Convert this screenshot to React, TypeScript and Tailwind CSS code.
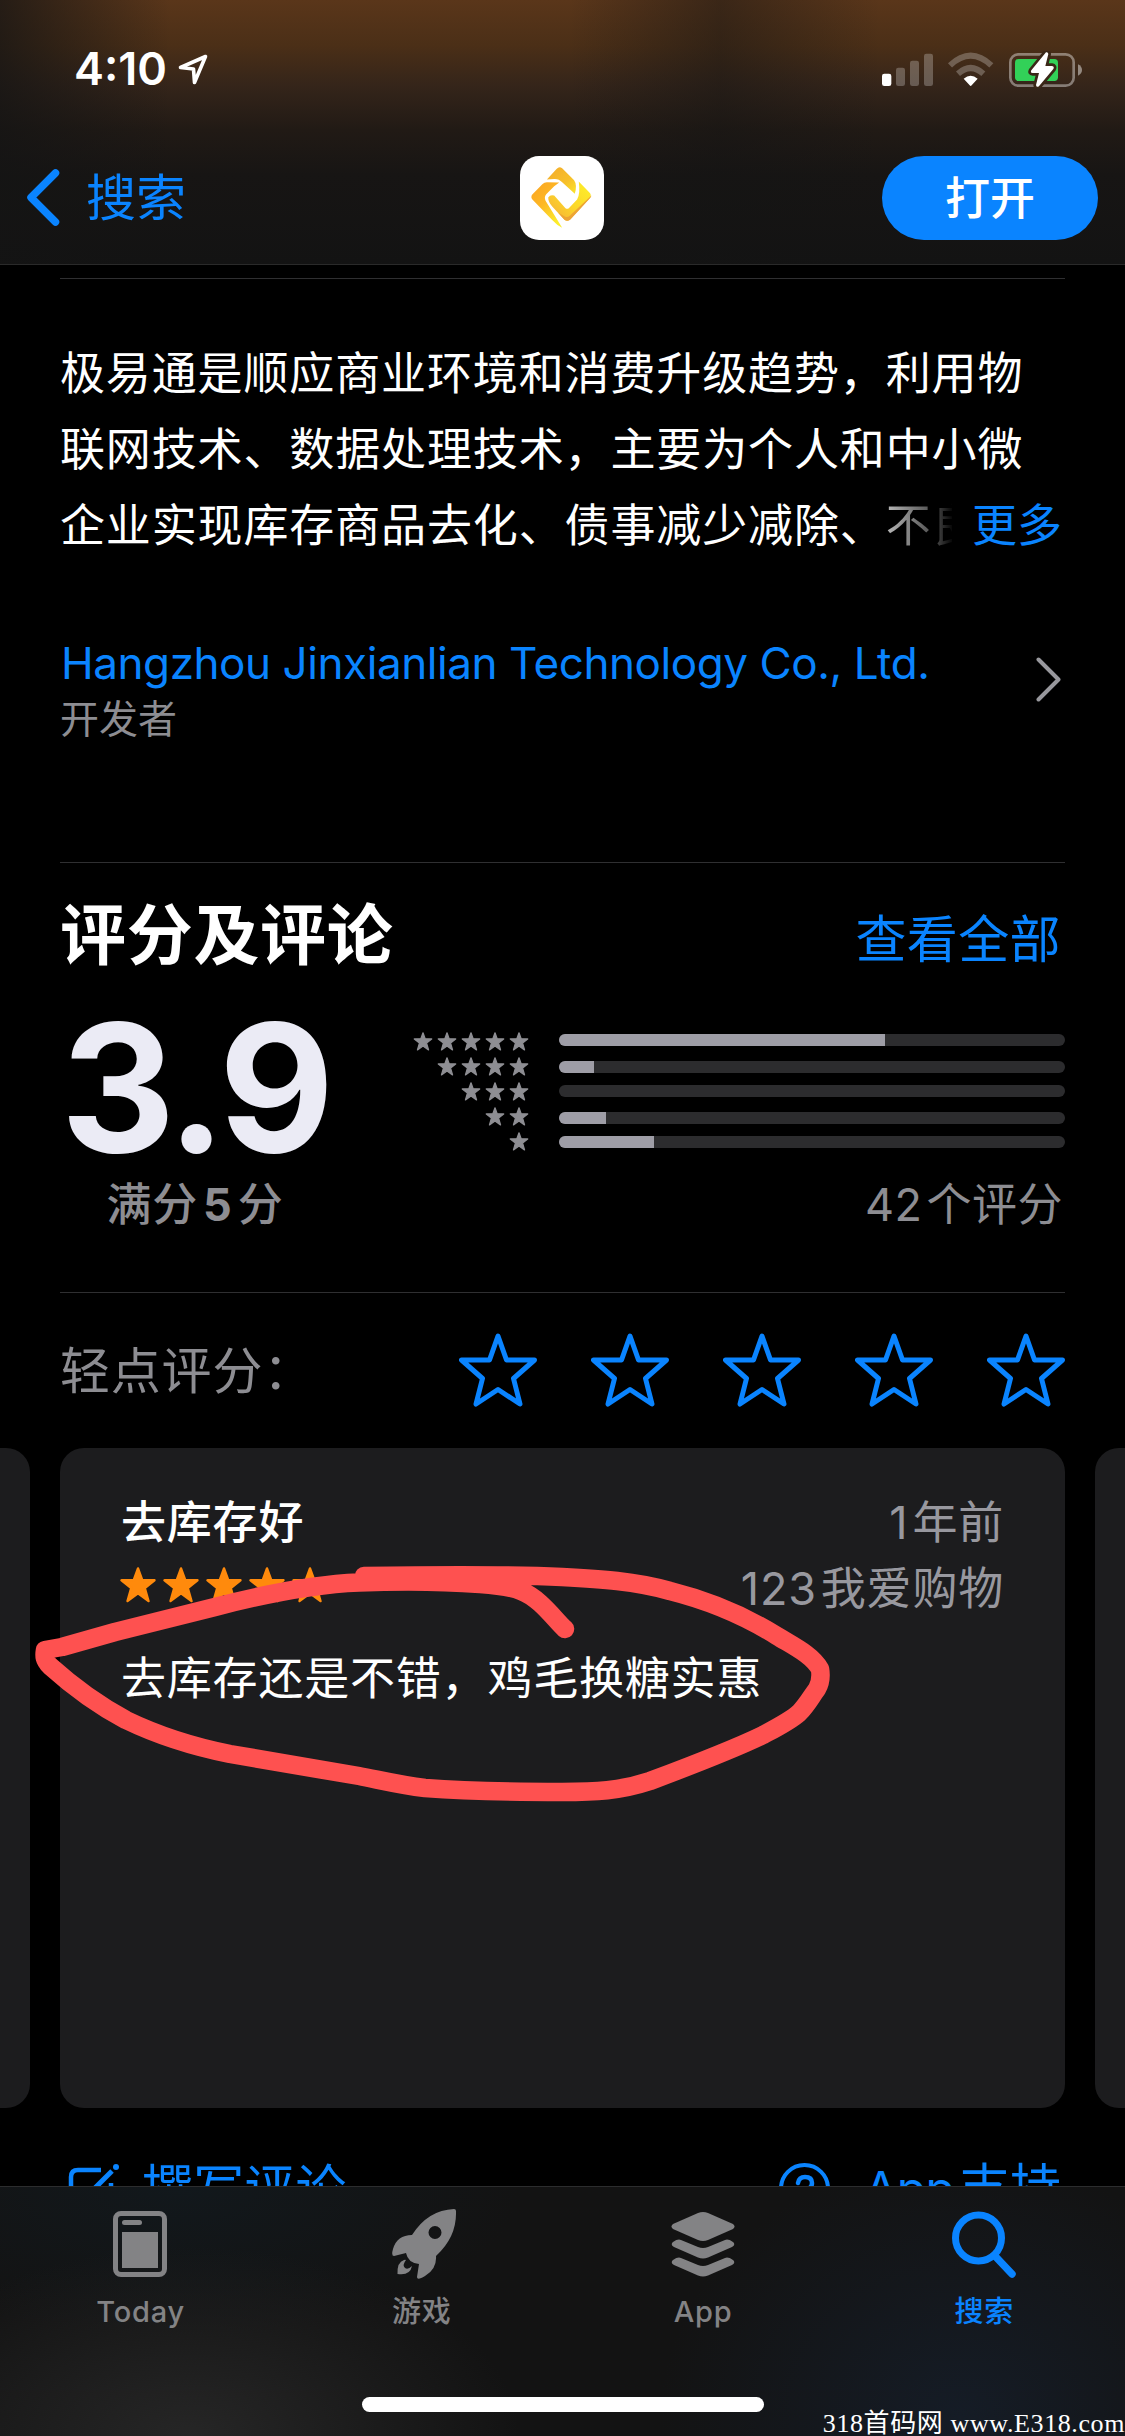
const HISTOGRAM = [
  { stars: 5, width: 326 },
  { stars: 4, width: 35 },
  { stars: 3, width: 0 },
  { stars: 2, width: 47 },
  { stars: 1, width: 95 },
]

const TABS = [
  { label: 'Today', icon: <TodayIcon />, color: 'text-[#838385]' },
  { label: '游戏', icon: <RocketIcon />, color: 'text-[#838385]' },
  { label: 'App', icon: <StackIcon />, color: 'text-[#838385]' },
  { label: '搜索', icon: <SearchIcon />, color: 'text-[#0a84ff]' },
]

function Star({ className }: { className: string }) {
  return (
    <svg className={className} viewBox="0 0 36 36" fill="currentColor" stroke="currentColor" strokeWidth="2.4" strokeLinejoin="round">
      <path d="M18 1.5 L22.200 13 L34.500 13.200 L24.800 21 L28.500 34 L18 26.400 L7.500 34 L11.200 21 L1.500 13.200 L13.800 13 Z" />
    </svg>
  )
}

function OutlineStar() {
  return (
    <svg className="w-[78px] h-[74px]" viewBox="0 0 78 74" fill="none" stroke="#0a84ff" strokeWidth="5" strokeLinejoin="round">
      <path d="M39 3 L47.5 27 L75.5 27 L54.5 45.5 L61 71 L39 56.5 L17 71 L23.5 45.5 L2.5 27 L30.5 27 Z" />
    </svg>
  )
}

function StatusIcons() {
  return (
    <svg className="w-[205px] h-[37px]" viewBox="30 30 615 111" fill="none">
      {/* Signal */}
      <rect x="36" y="98" width="28" height="37" rx="7" fill="#fff" />
      <g fill="#fff" fillOpacity="0.25">
        <rect x="78" y="80" width="27" height="55" rx="7" />
        <rect x="120" y="59" width="27" height="76" rx="7" />
        <rect x="162" y="38" width="27" height="97" rx="7" />
      </g>
      {/* Wifi */}
      <g stroke="#fff" strokeOpacity="0.25" strokeWidth="18">
        <path d="M240 73 Q302 15 364 73" />
        <path d="M264 98 Q302 64 340 98" />
      </g>
      <path d="M281 113 Q302 96 323 113 L305 133 Q302 137 299 133 Z" fill="#fff" />
      {/* Battery */}
      <rect x="421" y="40" width="190" height="94" rx="24" stroke="#fff" strokeOpacity="0.4" strokeWidth="8" />
      <path d="M624 70 Q636 76 636 87 Q636 98 624 104 Z" fill="#fff" fillOpacity="0.45" />
      <rect x="435" y="54" width="129" height="66" rx="11" fill="#32d158" />
      <path d="M528 34 L484 88 Q480 96 488 96 L507 96 L498 132 Q500 142 508 134 L550 84 Q554 76 546 75 L526 75 L535 39 Q534 32 528 34 Z" fill="#fff" stroke="#3a2717" strokeWidth="16" strokeLinejoin="round" paintOrder="stroke" />
    </svg>
  )
}

function AppLogo() {
  return (
    <svg className="w-[84px] h-[84px] rounded-[19px] bg-white" viewBox="31 33 253 253">
      <defs>
        <linearGradient id="top" x1="0" y1="0" x2="1" y2="1">
          <stop offset="0" stopColor="#f3ac2c" />
          <stop offset="0.6" stopColor="#f7bf2a" />
          <stop offset="1" stopColor="#fbe52a" />
        </linearGradient>
        <linearGradient id="left" x1="0" y1="0" x2="0.7" y2="1">
          <stop offset="0" stopColor="#fba324" />
          <stop offset="0.5" stopColor="#fdb824" />
          <stop offset="1" stopColor="#fcee2c" />
        </linearGradient>
        <linearGradient id="right" x1="1" y1="0" x2="0" y2="1">
          <stop offset="0" stopColor="#fdf02a" />
          <stop offset="0.5" stopColor="#fcd829" />
          <stop offset="1" stopColor="#f5a93a" />
        </linearGradient>
      </defs>
      <path d="M112 104 L141 72 Q149 63 158 70 L194 106 Q204 120 196 147 L158 112 Q148 101 134 102 Z" fill="url(#top)" />
      <path d="M68 149 L99 117 Q104 112 112 112 L149 113 Q143 118 134 124 L110 148 Q103 156 108 168 L158 249 Q142 242 128 226 L69 165 Q62 157 68 149 Z" fill="url(#left)" />
      <path d="M208 110 L240 143 Q248 151 241 160 L183 223 Q174 232 164 224 L128 185 Q116 172 116 158 Q122 148 134 152 L168 190 Q173 194 178 190 L203 164 Q213 148 208 110 Z" fill="url(#right)" />
      <path d="M246 152 Q246 156 241 161 L183 224 Q174 232 165 225 L146 204 L166 215 Q174 219 181 213 Z" fill="#eda435" />
    </svg>
  )
}

function TodayIcon() {
  return (
    <svg className="w-[54px] h-[66px] -ml-[2px]" viewBox="0 0 54 66" fill="none">
      <rect x="2.5" y="2.5" width="49" height="61" rx="5.5" stroke="currentColor" strokeWidth="5" />
      <rect x="9" y="9" width="20" height="5" rx="2.5" fill="currentColor" />
      <rect x="9" y="21" width="36" height="36" fill="currentColor" />
    </svg>
  )
}

function RocketIcon() {
  return (
    <svg className="w-[65px] h-[70px] ml-[5px]" viewBox="0 0 65 70" fill="currentColor">
      <path fillRule="evenodd" d="M62 0 Q64 0 64 2 Q65 28 44 47 Q45 60 33 67 Q25 72 25 68 L27 55 Q16 54 14 44 L2 47 Q-1 47 1 40 Q5 26 20 26 Q36 1 62 0 Z M43 17 A6.5 6.5 0 1 0 43 30 A6.5 6.5 0 1 0 43 17 Z" />
      <path d="M12 51 Q5 53 5.5 65 Q18 67 20 57 Q16 61 13 59 Q10 56 14 51 Q13 50.5 12 51 Z" />
    </svg>
  )
}

function StackIcon() {
  return (
    <svg className="w-[64px] h-[66px]" viewBox="0 0 64 66" fill="currentColor">
      <path d="M27 2 Q32 0 37 2 L62 13 Q65 15.500 62 18 L37 29 Q32 31 27 29 L2 18 Q-1 15.500 2 13 Z" />
      <path d="M2 31 Q7 27.500 10 29 L27 36 Q32 38 37 36 L54 29 Q57 27.500 62 31 Q65 33.500 61 36 L37 46.500 Q32 48.500 27 46.500 L3 36 Q-1 33.500 2 31 Z" />
      <path d="M2 49 Q7 45.500 10 47 L27 54 Q32 56 37 54 L54 47 Q57 45.500 62 49 Q65 51.500 61 54 L37 64.500 Q32 66.500 27 64.500 L3 54 Q-1 51.500 2 49 Z" />
    </svg>
  )
}

function SearchIcon() {
  return (
    <svg className="w-[64px] h-[67px]" viewBox="0 0 64 67" fill="none" stroke="currentColor" strokeLinecap="round">
      <circle cx="26.500" cy="27" r="23" strokeWidth="7" />
      <path d="M43 45 L60 63" strokeWidth="7.500" />
    </svg>
  )
}

export default function App() {
  return (
    <div className="relative w-[1125px] h-[2436px] overflow-hidden bg-black flex flex-col font-['Inter','Noto_Sans_CJK_SC',sans-serif] text-white">
      {/* Status bar + nav */}
      <header className="h-[265px] shrink-0 border-b border-[#2a2a2a] bg-[#141414] bg-[linear-gradient(to_right,rgba(20,20,20,0.75)_0,rgba(20,20,20,0)_170px,rgba(20,20,20,0)_570px,rgba(20,20,20,0.45)_720px,rgba(20,20,20,0)_880px),linear-gradient(to_bottom,#5a361a_0,#4b2f17_45px,#35251a_85px,#211a15_130px,#171514_175px,#131313_264px)]">
        <div className="h-[138px] pl-[74px] pr-[40px] flex items-center justify-between">
          <div className="flex items-center gap-[11px]">
            <span className="text-[45px] leading-[50px] font-semibold">4:10</span>
            <svg className="w-[30px] h-[31px]" viewBox="0 0 30 31" fill="none" stroke="#fff" strokeWidth="3.6" strokeLinejoin="round">
              <path d="M27.500 2.500 L2.500 13.500 L15.500 15 L16.500 28.500 Z" />
            </svg>
          </div>
          <StatusIcons />
        </div>
        <div className="h-[119px] pl-[26px] pr-[27px] grid grid-cols-[1fr_84px_1fr] items-center">
          <div className="flex items-center gap-[26px]">
            <svg className="w-[34px] h-[57px]" viewBox="0 0 34 57" fill="none" stroke="#0a84ff" strokeWidth="7.500" strokeLinecap="round" strokeLinejoin="round">
              <path d="M29.500 4 L5 28.500 L29.500 53" />
            </svg>
            <span className="text-[50px] leading-[60px] text-[#0a84ff]">搜索</span>
          </div>
          <AppLogo />
          <button className="justify-self-end w-[216px] h-[84px] rounded-full bg-[#0a84ff] text-[45px] leading-[86px] font-medium">打开</button>
        </div>
      </header>

      <main className="flex-1 min-h-0 overflow-hidden pt-[13px]">
        <div className="px-[60px]">
          <div className="h-px bg-[#2f2f31]" />

          {/* Description */}
          <div className="mt-[57px] text-[45px] leading-[76px] tracking-[0.87px] whitespace-nowrap">
            <p>极易通是顺应商业环境和消费升级趋势，利用物</p>
            <p>联网技术、数据处理技术，主要为个人和中小微</p>
            <div className="flex justify-between pr-[3px]">
              <p className="w-[892px] overflow-hidden">
                企业实现库存商品去化、债事减少减除、
                <span className="bg-linear-to-r from-[#b8b8b8] from-0% via-[#4a4a4a] via-[50px] to-black to-[74px] bg-clip-text text-transparent">不良</span>
              </p>
              <span className="text-[#0a84ff] tracking-normal">更多</span>
            </div>
          </div>

          {/* Developer */}
          <div className="mt-[72px] flex items-start justify-between pr-[4px]">
            <div>
              <p className="text-[44px] leading-[54px] tracking-[-0.43px] text-[#0a84ff] pl-[1px]">Hangzhou Jinxianlian Technology Co., Ltd.</p>
              <p className="text-[39px] leading-[58px] text-[#8d8d92]">开发者</p>
            </div>
            <svg className="mt-[21px] w-[25px] h-[45px]" viewBox="0 0 25 45" fill="none" stroke="#98989d" strokeWidth="4" strokeLinecap="round" strokeLinejoin="round">
              <path d="M2.500 2.500 L22.500 22.500 L2.500 42.500" />
            </svg>
          </div>

          <div className="mt-[114px] h-px bg-[#2f2f31]" />

          {/* Ratings */}
          <div className="mt-[32px] h-[80px] flex items-center justify-between pr-[4px]">
            <h2 className="text-[66px] leading-[80px] font-semibold tracking-[0.7px]">评分及评论</h2>
            <span className="text-[51px] leading-[80px] tracking-[0.4px] text-[#0a84ff] pt-[9px]">查看全部</span>
          </div>
          <div className="flex justify-between">
            <div className="w-[270px] flex flex-col items-center">
              <span className="mt-[34px] text-[178px] leading-[158px] font-bold tracking-[-5px] text-[#ebebf5]">3.9</span>
              <span className="mt-[7px] text-[45px] leading-[62px] font-medium tracking-[0.8px] text-[#8d8d92]">
                满分<span className="mx-[5px] font-bold">5</span>分
              </span>
            </div>
            <div className="flex flex-col items-end">
              <div className="mt-[54px] flex gap-[30px] text-[#8e8e93]">
                <div className="flex flex-col">
                  {HISTOGRAM.map(row => (
                    <div key={row.stars} className="h-[25px] flex items-center justify-end gap-[4px]">
                      {Array.from({ length: row.stars }, (_, i) => (
                        <Star key={i} className="w-[20px] h-[19px]" />
                      ))}
                    </div>
                  ))}
                </div>
                <div className="pt-[5px] w-[506px] grid grid-rows-[27px_24px_27px_24px_12px] items-start">
                  {HISTOGRAM.map(row => (
                    <div key={row.stars} className="h-[12px] rounded-full bg-[#2c2c2e] overflow-hidden">
                      <div className="h-full bg-[#9e9da6]" style={{ width: row.width }} />
                    </div>
                  ))}
                </div>
              </div>
              <span className="mt-[20px] pr-[2px] text-[45px] leading-[62px] text-[#8d8d92] tracking-[0.5px]">
                <span className="mr-[4px]">42</span>个评分
              </span>
            </div>
          </div>

          <div className="mt-[56px] h-px bg-[#2f2f31]" />

          <div className="h-[155px] flex items-center justify-between">
            <span className="text-[50px] leading-[62px] tracking-[0.8px] text-[#8d8d92]">轻点评分：</span>
            <div className="flex gap-[54px] pb-[2px]">
              {[1, 2, 3, 4, 5].map(n => <OutlineStar key={n} />)}
            </div>
          </div>
        </div>

        {/* Review carousel */}
        <div className="h-[660px] flex gap-[30px]">
          <div className="w-[30px] shrink-0 rounded-r-[24px] bg-[#1c1c1e]" />
          <article className="w-[1005px] shrink-0 rounded-[24px] bg-[#1c1c1e] pt-[42px] px-[61px] text-[45px]">
            <div className="h-[66px] flex items-center justify-between tracking-[0.8px]">
              <h3 className="font-medium">去库存好</h3>
              <span className="text-[#98989f]"><span className="mr-[4px]">1</span>年前</span>
            </div>
            <div className="h-[66px] flex items-center justify-between">
              <div className="flex gap-[7px] pb-[8px] -ml-[1px] text-[#ff8a0c]">
                {[1, 2, 3, 4, 5].map(n => <Star key={n} className="w-[36px] h-[36px]" />)}
              </div>
              <span className="text-[#98989f] tracking-[0.8px]"><span className="mr-[4px]">123</span>我爱购物</span>
            </div>
            <p className="mt-[19px] leading-[76px] tracking-[0.8px]">去库存还是不错，鸡毛换糖实惠</p>
          </article>
          <div className="w-[30px] shrink-0 rounded-l-[24px] bg-[#1c1c1e]" />
        </div>

        {/* Actions, cut off by the tab bar */}
        <div className="mt-[50px] pl-[68px] pr-[64px] flex justify-between text-[51px] leading-[60px] text-[#0a84ff]">
          <div className="flex items-center gap-[23px]">
            <svg className="w-[51px] h-[51px]" viewBox="0 0 51 51" fill="none" stroke="currentColor" strokeWidth="4.500" strokeLinecap="round">
              <path d="M33 7 H10 Q3 7 3 14 V41 Q3 48 10 48 H36 Q43 48 43 41 V20" strokeLinecap="butt" />
              <path d="M19 33 L44 8" strokeWidth="5" strokeLinecap="butt" />
              <path d="M48 4 L48 4" strokeWidth="6" />
            </svg>
            <span className="tracking-[0.2px]">撰写评论</span>
          </div>
          <div className="flex items-center gap-[34px]">
            <svg className="w-[51px] h-[51px]" viewBox="0 0 51 51" fill="none" stroke="currentColor" strokeWidth="4" strokeLinecap="round">
              <circle cx="25.500" cy="25.500" r="23.500" />
              <path d="M19 20 Q20 14 26 14 Q33 14 33 20 Q33 24 29 26 Q26 28 26 31" strokeWidth="4.500" />
              <path d="M26 37.500 V38" strokeWidth="5" />
            </svg>
            <span><span className="mr-[5px] text-[48px] tracking-[-0.8px]">App</span>支持</span>
          </div>
        </div>
      </main>

      {/* Tab bar */}
      <nav className="h-[250px] shrink-0 border-t border-[#2c2d2e] bg-[#131313] bg-[radial-gradient(ellipse_330px_190px_at_190px_250px,rgba(40,40,40,0.9),rgba(40,40,40,0)),radial-gradient(ellipse_300px_260px_at_960px_230px,#151c26,rgba(20,22,25,0)),radial-gradient(ellipse_340px_150px_at_180px_0px,#12181c,rgba(18,20,22,0))]">
        <div className="pt-[22px] grid grid-cols-4">
          {TABS.map(tab => (
            <div key={tab.label} className={`flex flex-col items-center ${tab.color}`}>
              <div className="h-[70px] flex items-center">{tab.icon}</div>
              <span className="mt-[12px] text-[29px] leading-[41px] font-medium tracking-[0.8px]">{tab.label}</span>
            </div>
          ))}
        </div>
        <div className="mt-[65px] mx-auto w-[402px] h-[15px] rounded-full bg-white" />
      </nav>

      {/* Hand-drawn marker circle around the review */}
      <svg className="absolute left-0 top-[1540px] w-[860px] h-[280px]" viewBox="0 1540 860 280" fill="none" stroke="#fe5150" strokeWidth="18.500" strokeLinecap="round" strokeLinejoin="round">
        <path d="M565 1629 C555 1620 540 1598 521 1591 C508 1586 495 1585 480 1584 C440 1581 395 1581 359 1582.500 C320 1584 265 1594 215 1607 L115 1632 L62 1647 L45 1650 C44 1656 44 1660 50 1666 C70 1684 96 1704 126 1720 C155 1734 190 1746 230 1754 L359 1776 C380 1780 400 1785 425 1788 C465 1791 520 1792 562 1792 C595 1792 620 1791 650 1781 C690 1766 730 1751 763 1735 C780 1726 790 1721 799 1713 C807 1705 811 1697 817 1689 C821 1682 821 1675 820 1669 C812 1655 795 1647 777 1636 C745 1616 710 1601 670 1591 C635 1581 600 1579 562 1577 C500 1574 430 1575 364 1576" />
      </svg>

      {/* Watermark */}
      <div className="absolute right-0 bottom-[-4px] whitespace-nowrap font-['Liberation_Serif','Noto_Sans_CJK_SC',serif] text-[26px] leading-[32px] tracking-[0.6px]">
        318首码网 www.E318.com
      </div>
    </div>
  )
}
